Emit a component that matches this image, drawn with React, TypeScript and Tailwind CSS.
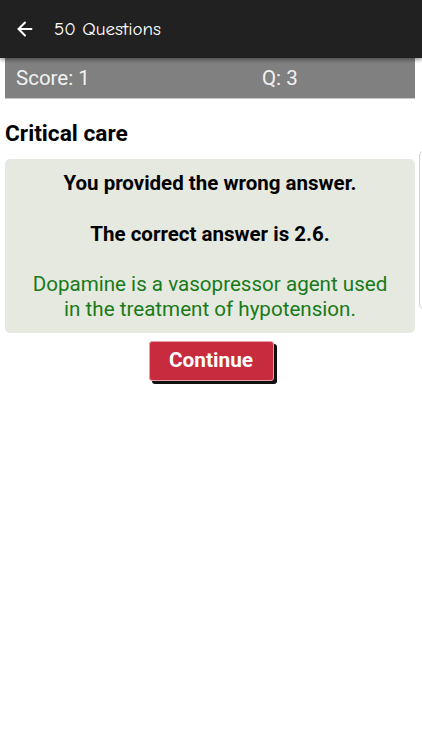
import { ArrowLeft } from 'lucide-react';

export default function App() {
  return (
    <div className="relative w-[422px] h-[750px] overflow-hidden bg-white font-['Roboto',sans-serif]">
      {/* App bar */}
      <div className="h-[58px] bg-[#212121] flex items-center px-[14px] shadow-[0_2px_4px_rgba(0,0,0,0.4)] relative z-10">
        <ArrowLeft className="w-[22px] h-[22px] text-white" strokeWidth={2.2} />
        <span className="ml-[18px] text-white text-[19px] font-['Comic_Neue','Comic_Sans_MS','Lato',sans-serif]">
          50 Questions
        </span>
      </div>

      {/* Score bar */}
      <div className="ml-[5px] w-[410px] h-[41px] bg-[#808080] flex items-center text-[#f2f2f2] text-[20.5px] border-b border-[#c8c8c8]">
        <span className="pl-[11px] w-[257px]">Score: 1</span>
        <span>Q: 3</span>
      </div>

      <div className="ml-[5px] w-[410px]">
        <h2 className="mt-[21px] text-[22.7px] font-bold text-black leading-[28px]">Critical care</h2>

        <div className="mt-[11px] bg-[#e6e9e0] rounded-[5px] pt-[11px] pb-[11px] px-[4px] text-center">
          <p className="text-[20.5px] font-bold text-black leading-[26px]">You provided the wrong answer.</p>
          <p className="mt-[25px] text-[20.5px] font-bold text-black leading-[26px]">The correct answer is 2.6.</p>
          <p className="mt-[25px] text-[20.6px] text-[#187a18] leading-[25px]">
            Dopamine is a vasopressor agent used
            <br />
            in the treatment of hypotension.
          </p>
        </div>

        <div className="flex justify-center mt-[8px]">
          <button className="ml-[2px] w-[125px] h-[40px] bg-[#c62c3d] text-white text-[20.8px] font-bold rounded-[3px] border border-[#e9a0a8] shadow-[3px_3px_0_#111]">
            Continue
          </button>
        </div>
      </div>

      {/* edge of next card */}
      <div className="absolute left-[419px] top-[150px] w-[20px] h-[160px] rounded-[6px] border border-[#d0d0d0]" />
    </div>
  );
}
